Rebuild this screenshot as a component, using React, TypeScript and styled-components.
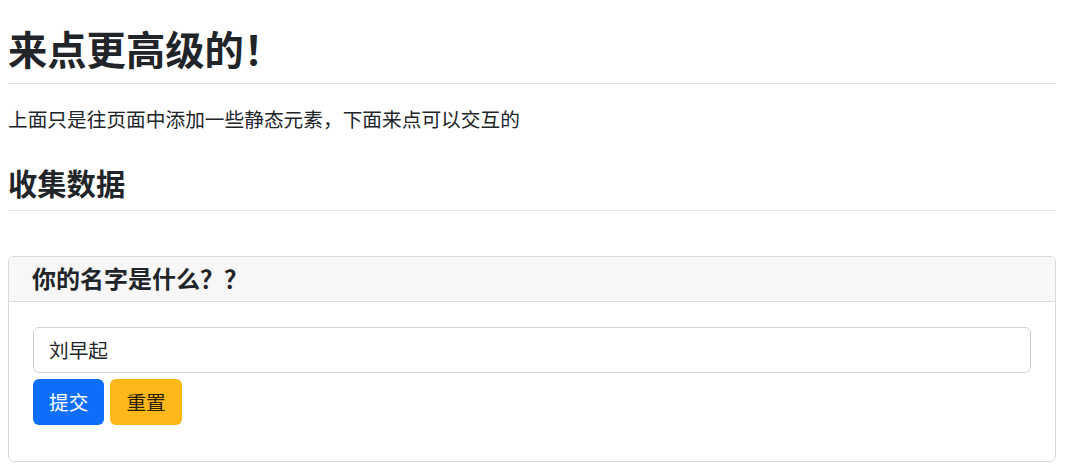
import React from "react";
import styled, { createGlobalStyle } from "styled-components";

const GlobalStyle = createGlobalStyle`
  html, body { margin: 0; padding: 0; background: #fff; }
  body {
    font-family: "Noto Sans CJK SC", "Noto Sans", "Liberation Sans", sans-serif;
    color: #212529;
    font-size: 19.7px;
    line-height: 1.5;
  }
  * { box-sizing: border-box; }
`;

const Page = styled.div`
  padding: 0 24px 0 8px;
`;

const Title = styled.h1`
  margin: 24px 0 12px;
  font-size: 39.3px;
  font-weight: 600;
  line-height: 1.2;
`;

const Rule = styled.hr`
  margin: 0;
  border: 0;
  border-top: 1px solid #e3e3e3;
`;

const Lead = styled.p`
  margin: 20px 0 31px;
  font-size: 19.7px;
`;

const SectionTitle = styled.h3`
  margin: 0 0 10px;
  font-size: 29.3px;
  font-weight: 600;
  line-height: 1.2;
`;

const Card = styled.section`
  margin-top: 45px;
  border: 1px solid #dadada;
  border-radius: 6px;
  overflow: hidden;
`;

const CardHeader = styled.div`
  background: #f7f7f7;
  border-bottom: 1px solid #d9d9d9;
  padding: 0 23px;
  height: 45px;
  display: flex;
  align-items: center;
`;

const CardTitle = styled.h5`
  margin: 0;
  font-size: 24px;
  font-weight: 600;
  line-height: 1.2;
`;

const CardBody = styled.div`
  padding: 25px 24px 36px;
  display: flex;
  flex-direction: column;
  gap: 6px;
`;

const TextInput = styled.input`
  width: 100%;
  height: 46px;
  padding: 0 15px;
  font: inherit;
  font-size: 19.7px;
  color: #212529;
  border: 1px solid #cfd3d8;
  border-radius: 6px;
  background: #fff;
  outline: none;
`;

const ButtonRow = styled.div`
  display: flex;
  gap: 6px;
`;

const Button = styled.button<{ $variant: "primary" | "warning" }>`
  height: 46px;
  padding: 0 16px;
  font: inherit;
  font-size: 19.7px;
  border: none;
  border-radius: 6px;
  cursor: pointer;
  background: ${(p) => (p.$variant === "primary" ? "#0d6efd" : "#ffb818")};
  color: ${(p) => (p.$variant === "primary" ? "#ffffff" : "#2b2005")};
`;

export default function App() {
  return (
    <>
      <GlobalStyle />
      <Page>
        <Title>来点更高级的！</Title>
        <Rule />
        <Lead>上面只是往页面中添加一些静态元素，下面来点可以交互的</Lead>
        <SectionTitle>收集数据</SectionTitle>
        <Rule />
        <Card>
          <CardHeader>
            <CardTitle>你的名字是什么？？</CardTitle>
          </CardHeader>
          <CardBody>
            <TextInput defaultValue="刘早起" />
            <ButtonRow>
              <Button $variant="primary">提交</Button>
              <Button $variant="warning">重置</Button>
            </ButtonRow>
          </CardBody>
        </Card>
      </Page>
    </>
  );
}
